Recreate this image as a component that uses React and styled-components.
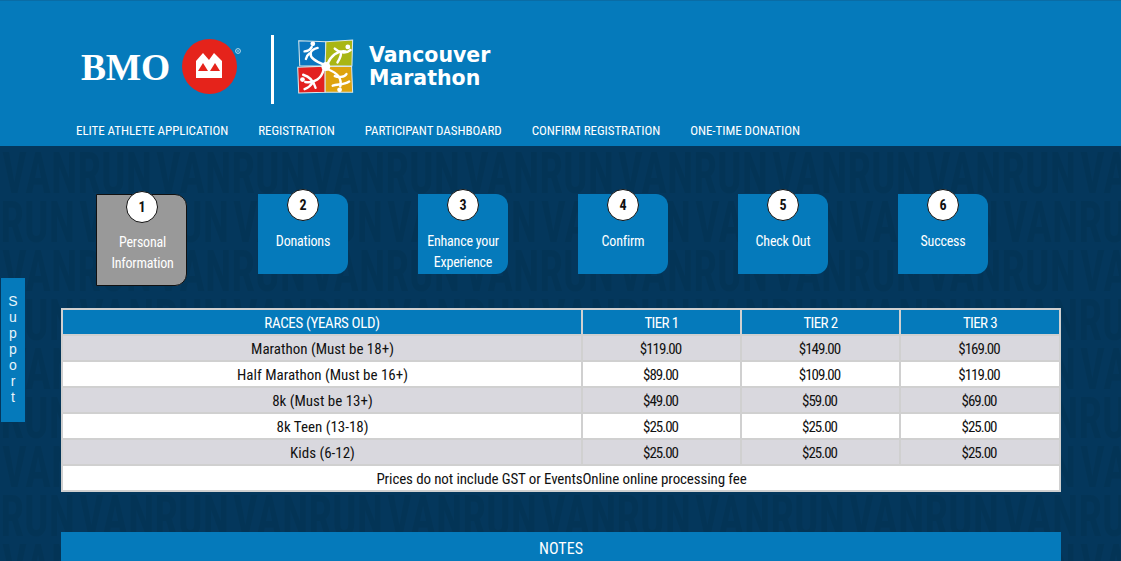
import styled, { createGlobalStyle } from 'styled-components';

const GlobalStyle = createGlobalStyle`
  html, body {
    margin: 0;
    height: 100%;
    overflow: hidden;
    background: #04375c;
  }
`;

const narrow = `"Liberation Sans Narrow", "Roboto Condensed", Roboto, sans-serif`;

const steps = [
  { n: 1, label: ['Personal', 'Information'], active: true },
  { n: 2, label: ['Donations'] },
  { n: 3, label: ['Enhance your', 'Experience'] },
  { n: 4, label: ['Confirm'] },
  { n: 5, label: ['Check Out'] },
  { n: 6, label: ['Success'] },
];

const rows = [
  ['Marathon (Must be 18+)', '$119.00', '$149.00', '$169.00'],
  ['Half Marathon (Must be 16+)', '$89.00', '$109.00', '$119.00'],
  ['8k (Must be 13+)', '$49.00', '$59.00', '$69.00'],
  ['8k Teen (13-18)', '$25.00', '$25.00', '$25.00'],
  ['Kids (6-12)', '$25.00', '$25.00', '$25.00'],
];

const navItems = ['ELITE ATHLETE APPLICATION', 'REGISTRATION', 'PARTICIPANT DASHBOARD', 'CONFIRM REGISTRATION', 'ONE-TIME DONATION'];

const App = () => {
  return (
    <>
      <GlobalStyle />
      <Header>
        <LogoRow>
          <BmoWord>BMO</BmoWord>
          <BmoRoundel viewBox="0 0 62 62">
            <circle cx="27.500" cy="28.500" r="27.500" fill="#e5231b" />
            <path d="M14 40V23l7-8 6 7 5-7 8 8v17z" fill="#fff" />
            <path d="M16 33l5-8 5 8zM28 33l5-8 5 8z" fill="#e5231b" />
            <circle cx="56" cy="13" r="2.400" fill="none" stroke="#cfe6f2" strokeWidth="0.900" />
            <circle cx="56" cy="13" r="0.800" fill="#cfe6f2" />
          </BmoRoundel>
          <LogoDivider />
          <MarathonMark viewBox="8 10 166 160">
            <polygon points="13,15 92,18 90,89 16,88" fill="#0a76c0" stroke="#dbe7ea" strokeWidth="3" />
            <polygon points="92,18 170,13 168,88 90,89" fill="#a9b614" stroke="#dbe7ea" strokeWidth="3" />
            <polygon points="10,92 90,89 90,165 13,167" fill="#e3201f" stroke="#dbe7ea" strokeWidth="3" />
            <polygon points="90,89 167,90 170,165 90,165" fill="#dea30e" stroke="#dbe7ea" strokeWidth="3" />
            <g fill="none" stroke="#fff" strokeWidth="7" strokeLinecap="round">
              <path d="M85 84C65 76 44 66 48 50 50 42 60 38 68 36" />
              <path d="M30 46C38 46 47 40 51 33M34 68C36 60 38 56 44 52" />
              <path d="M97 82C106 60 126 42 150 46" />
              <path d="M118 38C130 50 150 54 164 42M126 78C131 70 136 62 136 52" />
              <path d="M86 97C80 124 60 140 32 135" />
              <path d="M26 114C40 118 56 130 62 152M30 156C40 152 48 146 54 136" />
              <path d="M98 98C124 108 140 124 134 148" />
              <path d="M112 146C126 140 142 146 160 134M118 118C128 122 146 122 152 112" />
            </g>
            <g fill="#fff">
              <circle cx="54" cy="24" r="7" />
              <circle cx="156" cy="33" r="7" />
              <circle cx="24" cy="128" r="7" />
              <circle cx="132" cy="158" r="7" />
              <circle cx="92" cy="90" r="13" />
            </g>
          </MarathonMark>
          <MarathonName>Vancouver<br />Marathon</MarathonName>
        </LogoRow>
        <Nav>
          {navItems.map((item) => <NavLink key={item}>{item}</NavLink>)}
        </Nav>
      </Header>

      <Main>
        <Texture aria-hidden="true">
          <defs>
            <pattern id="letters" width="154" height="98" patternUnits="userSpaceOnUse">
              <rect width="154" height="98" fill="#04375c" />
              <TextureWord x="2" y="47" textLength="150" lengthAdjust="spacingAndGlyphs">VANRUN</TextureWord>
              <TextureWord x="-75" y="96" textLength="150" lengthAdjust="spacingAndGlyphs">VANRUN</TextureWord>
              <TextureWord x="79" y="96" textLength="150" lengthAdjust="spacingAndGlyphs">VANRUN</TextureWord>
            </pattern>
          </defs>
          <rect width="100%" height="100%" fill="url(#letters)" />
        </Texture>

        <SupportTab>
          {'Support'.split('').map((c, i) => <span key={i}>{c}</span>)}
        </SupportTab>

        <Steps>
          {steps.map((s) => (
            <StepBox key={s.n} $active={s.active}>
              <StepNumber $active={s.active}>{s.n}</StepNumber>
              <StepLabel>
                {s.label.map((l) => <span key={l}>{l}</span>)}
              </StepLabel>
            </StepBox>
          ))}
        </Steps>

        <PriceTable>
          <colgroup>
            <col width="520" />
            <col width="159" />
            <col width="159" />
            <col width="160" />
          </colgroup>
          <thead>
            <tr>
              <HeadCell $spacing="-0.35px">RACES (YEARS OLD)</HeadCell>
              <HeadCell>TIER 1</HeadCell>
              <HeadCell>TIER 2</HeadCell>
              <HeadCell>TIER 3</HeadCell>
            </tr>
          </thead>
          <tbody>
            {rows.map((row, i) => (
              <tr key={row[0]}>
                {row.map((v, j) => <Cell key={j} $shaded={i % 2 === 0} $price={j > 0}>{v}</Cell>)}
              </tr>
            ))}
            <tr>
              <Cell colSpan={4} $spacing="-0.12px">Prices do not include GST or EventsOnline online processing fee</Cell>
            </tr>
          </tbody>
        </PriceTable>

        <NotesBar>NOTES</NotesBar>
      </Main>
    </>
  );
};

export default App;

const Header = styled.header`
  height: 146px;
  box-sizing: border-box;
  background: #057abb;
  border-top: 1px solid #0a6ca5;
  padding: 33px 0 0 76px;
`;
const LogoRow = styled.div`
  display: flex;
  align-items: center;
  height: 70px;
`;
const BmoWord = styled.div`
  font-family: "Liberation Serif", serif;
  font-weight: 700;
  font-size: 37.500px;
  letter-spacing: -0.2px;
  color: #fff;
  width: 106px;
  padding: 0 0 3px 5px;
  box-sizing: border-box;
`;
const BmoRoundel = styled.svg`
  width: 62px;
  height: 62px;
  margin-right: 27px;
`;
const LogoDivider = styled.div`
  width: 3px;
  height: 69px;
  background: #fff;
  margin-right: 23px;
`;
const MarathonMark = styled.svg`
  width: 57px;
  height: 55px;
  margin: -6px 15px 0 0;
`;
const MarathonName = styled.div`
  font-family: "DejaVu Sans", sans-serif;
  font-weight: 700;
  font-size: 20.500px;
  line-height: 23px;
  color: #fff;
  margin-top: -4px;
`;
const Nav = styled.nav`
  display: flex;
  gap: 30px;
  margin-top: 12px;
`;
const NavLink = styled.a`
  font-family: ${narrow};
  font-size: 13px;
  font-weight: 400;
  letter-spacing: -0.06px;
  color: #fff;
  line-height: 30px;
`;
const Main = styled.main`
  position: relative;
  height: 415px;
  overflow: hidden;
  padding: 48px 60px 0 61px;
  box-sizing: border-box;
`;
const Texture = styled.svg`
  position: absolute;
  inset: 0;
  width: 100%;
  height: 100%;
`;
const TextureWord = styled.text`
  font-family: ${narrow};
  font-size: 58px;
  font-weight: 700;
  fill: #033456;
`;
const SupportTab = styled.div`
  position: absolute;
  left: 1px;
  top: 132px;
  width: 24px;
  height: 144px;
  padding-top: 15px;
  box-sizing: border-box;
  background: #057abb;
  display: flex;
  flex-direction: column;
  align-items: center;
  font-family: "Liberation Sans", sans-serif;
  font-size: 14px;
  line-height: 16px;
  color: #e8f4fa;
`;
const Steps = styled.div`
  position: relative;
  display: flex;
  align-items: flex-start;
  gap: 70px;
  padding-left: 35px;
  height: 114px;
`;
const StepBox = styled.div`
  position: relative;
  box-sizing: border-box;
  width: ${(p) => (p.$active ? '91px' : '90px')};
  height: ${(p) => (p.$active ? '92px' : '80px')};
  margin-right: ${(p) => (p.$active ? '1px' : '0')};
  background: ${(p) => (p.$active ? '#999' : '#057abb')};
  border: ${(p) => (p.$active ? '1px solid #111' : 'none')};
  border-radius: 0 12px 12px 0;
  display: flex;
  justify-content: center;
  padding: 37px 0 0 ${(p) => (p.$active ? '2px' : '0')};
`;
const StepNumber = styled.div`
  position: absolute;
  top: ${(p) => (p.$active ? '-4px' : '-5px')};
  left: 29px;
  width: 30px;
  height: 30px;
  border: 1px solid #111;
  border-radius: 50%;
  background: #fff;
  display: flex;
  align-items: center;
  justify-content: center;
  font-family: ${narrow};
  font-size: 14px;
  font-weight: 700;
  color: #111;
`;
const StepLabel = styled.div`
  display: flex;
  flex-direction: column;
  align-items: center;
  font-family: ${narrow};
  font-size: 14px;
  font-weight: 400;
  letter-spacing: -0.2px;
  line-height: 21px;
  color: #fff;
  text-align: center;
`;
const PriceTable = styled.table`
  position: relative;
  width: 998px;
  border-collapse: collapse;
  table-layout: fixed;
  border: 2px solid #d0d0d0;
  background: #fff;
`;
const HeadCell = styled.th`
  box-sizing: border-box;
  height: 26px;
  padding: 1px 0 0;
  background: #057abb;
  border: 2px solid #d0d0d0;
  font-family: ${narrow};
  font-size: 15px;
  font-weight: 400;
  letter-spacing: ${(p) => p.$spacing || '-0.6px'};
  color: #fff;
`;
const Cell = styled.td`
  box-sizing: border-box;
  height: 26px;
  padding: 1px ${(p) => (p.$price ? '2px' : '0')} 0 ${(p) => (p.$price ? '0' : '1px')};
  text-align: center;
  background: ${(p) => (p.$shaded ? '#d9d8de' : '#fff')};
  border: 2px solid #d0d0d0;
  font-family: ${narrow};
  font-size: 15px;
  letter-spacing: ${(p) => (p.$price ? '-1px' : p.$spacing || '0')};
  color: #111;
`;
const NotesBar = styled.div`
  position: relative;
  margin-top: 40px;
  width: 1000px;
  height: 36px;
  background: #057abb;
  font-family: ${narrow};
  font-size: 16px;
  line-height: 34px;
  text-align: center;
  color: #fff;
`;
